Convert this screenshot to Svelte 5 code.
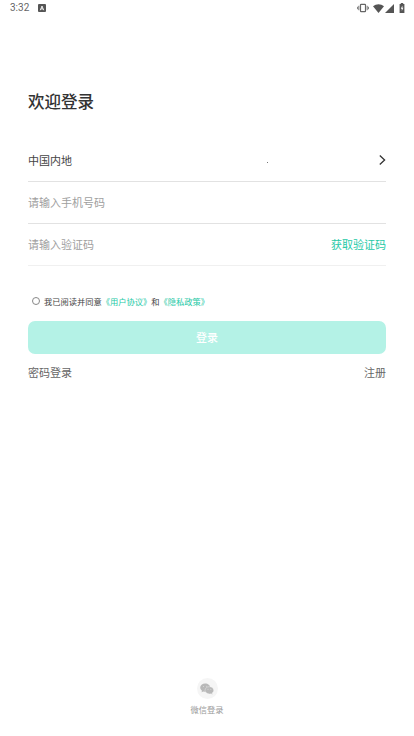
<script>
  let region = "中国内地";
  let phone = "";
  let code = "";
  let agreed = false;
</script>

<div class="screen">
  <header class="status">
    <span class="time">3:32</span>
    <svg class="badge" width="8" height="8" viewBox="0 0 8 8">
      <rect width="8" height="8" rx="1" fill="#555" />
      <path d="M2.3 6.2 4 2l1.7 4.2M3 4.9h2" fill="none" stroke="#fff" stroke-width="0.9" />
    </svg>
    <div class="signals">
      <svg width="12" height="10" viewBox="0 0 12 10" fill="none" stroke="#666">
        <rect x="3.5" y="1.3" width="5" height="7.4" rx="0.7" stroke-width="1.2" />
        <path d="M1.8 2.8v4.4M10.2 2.8v4.4M0.4 3.8v2.4M11.6 3.8v2.4" stroke-width="0.9" />
      </svg>
      <svg class="wifi" width="11" height="9" viewBox="0 0 11 9">
        <path d="M0 2.3C3.2-.4 7.8-.4 11 2.3L5.5 9z" fill="#555" />
      </svg>
      <svg class="cell" width="9" height="9" viewBox="0 0 9 9">
        <path d="M9 0v9H0z" fill="#555" />
      </svg>
      <svg class="battery" width="6" height="10" viewBox="0 0 6 10">
        <path d="M1.8 0h2.4v1H5.4v9H.6V1h1.2z" fill="#555" />
        <path d="M3.4 2.5 1.8 5.7h1v2.4l1.6-3.3h-1z" fill="#fff" />
      </svg>
    </div>
  </header>

  <main>
    <h1>欢迎登录</h1>

    <div class="row region">
      <span>{region}</span>
      <span class="dot"></span>
      <svg width="8" height="12" viewBox="0 0 8 12">
        <path d="M1.8 1.5 6.6 6 1.8 10.5" fill="none" stroke="#333" stroke-width="1.3" />
      </svg>
    </div>
    <div class="row">
      <input type="tel" placeholder="请输入手机号码" bind:value={phone} />
    </div>
    <div class="row last">
      <input type="text" placeholder="请输入验证码" bind:value={code} />
      <button class="send">获取验证码</button>
    </div>

    <div class="agreement">
      <button class="radio" class:checked={agreed} aria-label="同意" on:click={() => agreed = !agreed}></button>
      <span>我已阅读并同意<a href="#user">《用户协议》</a>和<a href="#privacy">《隐私政策》</a></span>
    </div>

    <button class="login">登录</button>

    <div class="links">
      <button>密码登录</button>
      <button>注册</button>
    </div>
  </main>

  <footer>
    <div class="wechat">
      <svg width="14" height="12" viewBox="0 0 14 12">
        <path d="M5.2 0.5C2.3.5.2 2.3.2 4.6c0 1.3.7 2.4 1.8 3.1l-.5 1.6 1.8-.9c.6.2 1.2.3 1.9.3 2.8 0 5-1.8 5-4.1S8 .5 5.2.5z" fill="#b8b8b8" />
        <path d="M9.4 3.7c-2.5 0-4.4 1.6-4.4 3.6s1.9 3.6 4.4 3.6c.6 0 1.1-.1 1.6-.2l1.5.8-.4-1.4c1-.7 1.6-1.7 1.6-2.8 0-2-1.9-3.6-4.3-3.6z" fill="#b8b8b8" stroke="#f5f5f5" stroke-width="0.4" />
        <g fill="#ddd">
          <circle cx="3.5" cy="3.4" r="0.5" />
          <circle cx="6.7" cy="3.2" r="0.5" />
          <circle cx="8" cy="6.3" r="0.5" />
          <circle cx="10.8" cy="6.3" r="0.5" />
        </g>
      </svg>
    </div>
    <span>微信登录</span>
  </footer>
</div>

<style>
  :global(body) {
    background: #fff;
  }

  .screen {
    display: flex;
    flex-direction: column;
    box-sizing: border-box;
    height: 736px;
    overflow: hidden;
    color: #444;
    font-family: "Noto Sans CJK SC", sans-serif;
  }

  button, input {
    margin: 0;
    padding: 0;
    border: none;
    background: none;
    font-family: inherit;
    color: inherit;
  }

  .status {
    display: flex;
    align-items: center;
    height: 16px;
    padding: 0 9px 1px 10px;
  }

  .time {
    font: 10px/16px Roboto, sans-serif;
    color: #666;
  }

  .badge {
    margin-left: 9px;
  }

  .signals {
    display: flex;
    align-items: center;
    margin-left: auto;
    height: 16px;
  }

  .wifi {
    margin-left: 4px;
  }

  .cell {
    margin-left: 1px;
  }

  .battery {
    margin-left: 5px;
  }

  main {
    padding: 0 28px;
  }

  h1 {
    margin: 72px 0 27px;
    font-size: 16.5px;
    line-height: 24px;
    font-weight: 500;
    color: #333;
  }

  .row {
    display: flex;
    align-items: center;
    box-sizing: border-box;
    height: 42px;
    padding-bottom: 2px;
    border-bottom: 1px solid #e2e2e2;
    font-size: 11px;
  }

  .row.last {
    border-color: #f0f0f0;
  }

  .region svg {
    margin: 1px 0 0 auto;
  }

  .dot {
    width: 1px;
    height: 1px;
    margin: 5px 0 0 195px;
    background: #777;
  }

  .row input {
    flex: 1;
    min-width: 0;
    height: 30px;
    outline: none;
    font-size: 11px;
  }

  .row input::placeholder {
    color: #a0a0a0;
    opacity: 1;
  }

  .send {
    font-size: 11px;
    color: #25c9a6;
  }

  .agreement {
    display: flex;
    align-items: center;
    height: 16px;
    margin: 27px 0 12px 4px;
    font-size: 8.25px;
    white-space: nowrap;
  }

  .agreement a {
    color: #25c9a6;
    text-decoration: none;
  }

  .radio {
    box-sizing: border-box;
    width: 8px;
    height: 8px;
    margin-right: 4px;
    border: 1px solid #888;
    border-radius: 50%;
  }

  .radio.checked {
    background: #25c9a6;
  }

  .login {
    display: block;
    width: 100%;
    height: 33px;
    padding-bottom: 2px;
    border-radius: 7px;
    background: #b4f2e6;
    color: #fff;
    font-size: 11px;
    font-weight: 500;
  }

  .links {
    display: flex;
    justify-content: space-between;
    margin-top: 10px;
  }

  .links button {
    font-size: 11px;
    line-height: 17px;
    color: #666;
  }

  footer {
    display: flex;
    flex-direction: column;
    align-items: center;
    margin-top: auto;
    padding-bottom: 21px;
    font-size: 8.25px;
    line-height: 12px;
    color: #999;
  }

  .wechat {
    display: flex;
    align-items: center;
    justify-content: center;
    width: 21px;
    height: 21px;
    margin-bottom: 4px;
    border-radius: 50%;
    background: #f5f5f5;
  }
</style>
